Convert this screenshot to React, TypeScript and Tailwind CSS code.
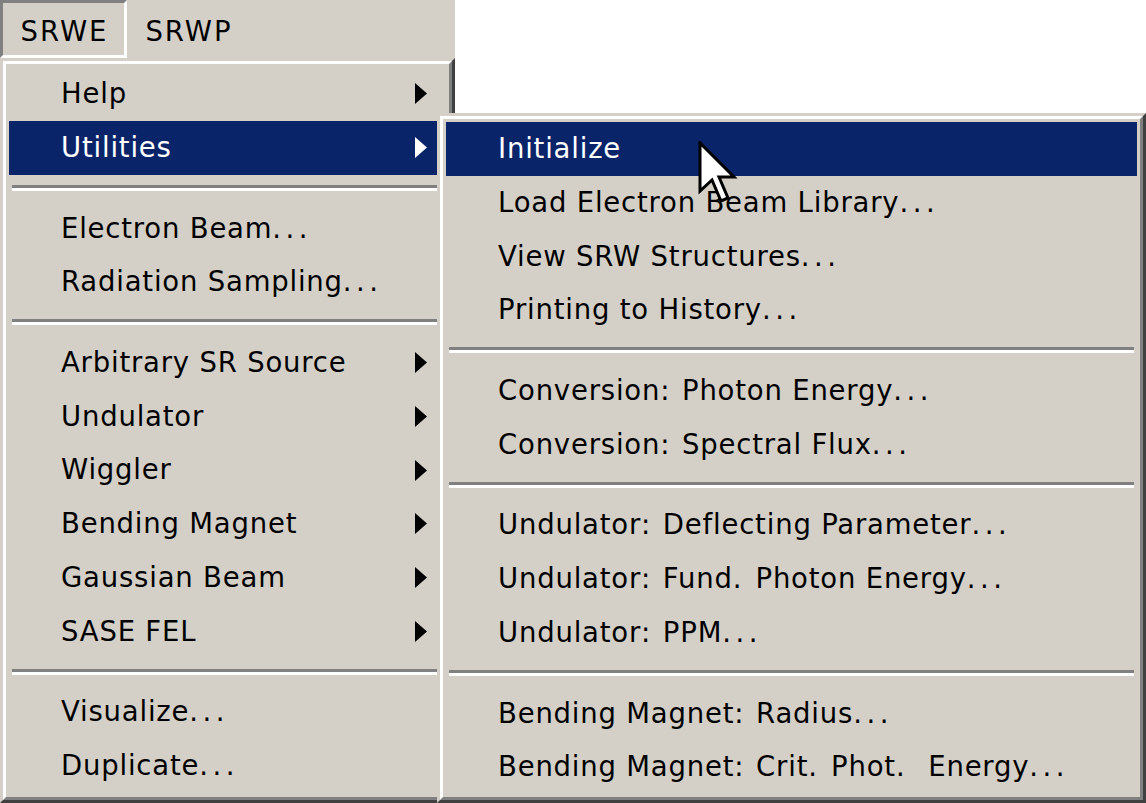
import React from "react";

type Item = { label: string; sub?: boolean; active?: boolean } | "sep";

const FONT = { fontFamily: '"DejaVu Sans", Verdana, sans-serif' };

const mainItems: Item[] = [
  { label: "Help", sub: true },
  { label: "Utilities", sub: true, active: true },
  "sep",
  { label: "Electron Beam..." },
  { label: "Radiation Sampling..." },
  "sep",
  { label: "Arbitrary SR Source", sub: true },
  { label: "Undulator", sub: true },
  { label: "Wiggler", sub: true },
  { label: "Bending Magnet", sub: true },
  { label: "Gaussian Beam", sub: true },
  { label: "SASE FEL", sub: true },
  "sep",
  { label: "Visualize..." },
  { label: "Duplicate..." },
];

const subItems: Item[] = [
  { label: "Initialize", active: true },
  { label: "Load Electron Beam Library..." },
  { label: "View SRW Structures..." },
  { label: "Printing to History..." },
  "sep",
  { label: "Conversion: Photon Energy..." },
  { label: "Conversion: Spectral Flux..." },
  "sep",
  { label: "Undulator: Deflecting Parameter..." },
  { label: "Undulator: Fund. Photon Energy..." },
  { label: "Undulator: PPM..." },
  "sep",
  { label: "Bending Magnet: Radius..." },
  { label: "Bending Magnet: Crit. Phot.\u00a0 Energy..." },
];

// the old bitmap font spaces its dots and colons out a lot wider
function Label({ text }: { text: string }) {
  const parts = text.split(/([.:])/);
  return (
    <>
      {parts.map((p, i) =>
        p === "." ? (
          <span key={i} className="tracking-[4.5px]">
            .
          </span>
        ) : p === ":" ? (
          <span key={i} className="tracking-[3px]">
            :
          </span>
        ) : (
          <React.Fragment key={i}>{p}</React.Fragment>
        )
      )}
    </>
  );
}

function Arrow({ white }: { white?: boolean }) {
  return (
    <svg width="12" height="21" viewBox="0 0 4 7" className="shrink-0">
      <polygon points="0,0 4,3.5 0,7" fill={white ? "#ffffff" : "#000000"} />
    </svg>
  );
}

function MenuList({ items }: { items: Item[] }) {
  return (
    <div className="flex flex-col">
      {items.map((it, i) =>
        it === "sep" ? (
          <div key={i} className="h-[26.9px] flex flex-col justify-center px-[3px]">
            <div className="h-[3px] bg-[#808080]" />
            <div className="h-[3px] bg-white" />
          </div>
        ) : (
          <div
            key={i}
            className={
              "h-[53.75px] flex items-center pl-[52px] pr-[19px] " +
              (it.active ? "bg-[#0A246A] text-white" : "text-black")
            }
          >
            <span className="flex-1 whitespace-nowrap text-[27.5px] leading-none tracking-[0.8px]">
              <Label text={it.label} />
            </span>
            {it.sub && <Arrow white={it.active} />}
          </div>
        )
      )}
    </div>
  );
}

function MenuFrame({ children, className }: { children: React.ReactNode; className?: string }) {
  return (
    <div
      className={
        "border-[3px] border-t-[#D4D0C8] border-l-[#D4D0C8] border-r-[#404040] border-b-[#404040] bg-[#D4D0C8] " +
        (className ?? "")
      }
    >
      <div className="h-full border-[3px] border-t-white border-l-white border-r-[#808080] border-b-[#808080] p-[3px]">
        {children}
      </div>
    </div>
  );
}

function Cursor() {
  return (
    <svg
      width="40"
      height="64"
      viewBox="-2 -2 40 64"
      className="absolute left-[698px] top-[141px]"
    >
      <path
        d="M0 0 L0 48 L12 37 L21 58 L28 55 L19 34 L34 34 Z"
        fill="#ffffff"
        stroke="#000000"
        strokeWidth="3"
        strokeLinejoin="miter"
      />
    </svg>
  );
}

export default function App() {
  return (
    <div className="relative w-[1146px] h-[803px] overflow-hidden bg-white" style={FONT}>
      <div className="w-[455px] h-full flex flex-col">
        <div className="h-[58px] shrink-0 bg-[#D4D0C8] flex items-stretch text-[27.5px] leading-none tracking-[2px] text-black">
          <div className="w-[127px] flex items-center justify-center pt-[6px] pl-[2px] border-[3px] border-t-[#808080] border-l-[#808080] border-r-white border-b-white">
            SRWE
          </div>
          <div className="w-[124px] flex items-center justify-center pt-[6px]">SRWP</div>
        </div>
        <MenuFrame className="flex-1">
          <MenuList items={mainItems} />
        </MenuFrame>
      </div>

      <MenuFrame className="absolute left-[437px] top-[113px] w-[709px] h-[690px]">
        <MenuList items={subItems} />
      </MenuFrame>

      <Cursor />
    </div>
  );
}
